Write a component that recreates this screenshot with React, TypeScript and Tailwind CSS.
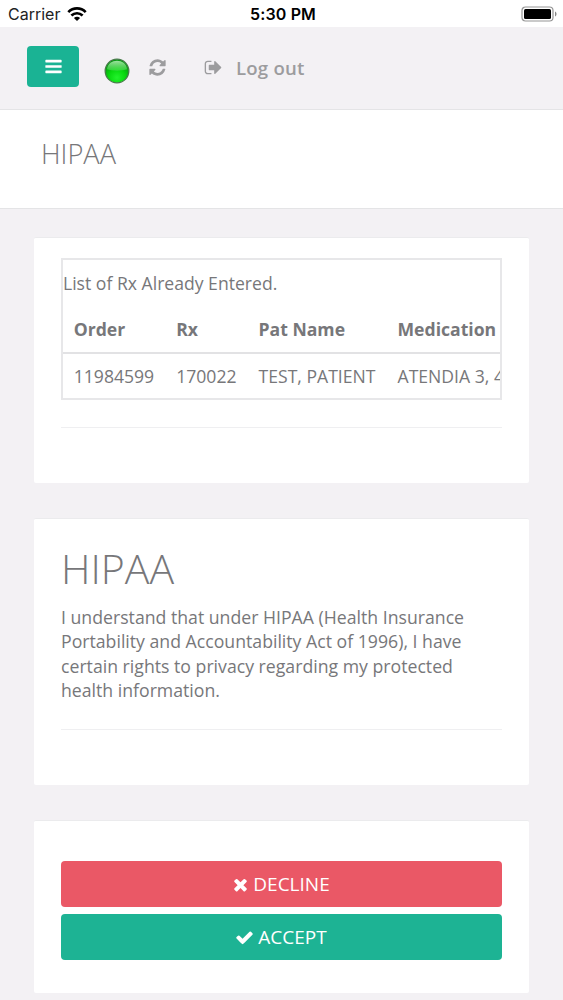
import type { ReactNode } from "react";

const ICONS = {
  bars: "M1664 1344v128q0 26-19 45t-45 19h-1408q-26 0-45-19t-19-45v-128q0-26 19-45t45-19h1408q26 0 45 19t19 45zm0-512v128q0 26-19 45t-45 19h-1408q-26 0-45-19t-19-45v-128q0-26 19-45t45-19h1408q26 0 45 19t19 45zm0-512v128q0 26-19 45t-45 19h-1408q-26 0-45-19t-19-45v-128q0-26 19-45t45-19h1408q26 0 45 19t19 45z",
  refresh:
    "M1639 1056q0 5-1 7-64 268-268 434.5t-478 166.5q-146 0-282.5-55t-243.5-157l-129 129q-19 19-45 19t-45-19-19-45v-448q0-26 19-45t45-19h448q26 0 45 19t19 45-19 45l-137 137q71 66 161 102t187 36q134 0 250-65t186-179q11-17 53-117 8-23 30-23h192q13 0 22.5 9.5t9.5 22.5zm25-800v448q0 26-19 45t-45 19h-448q-26 0-45-19t-19-45 19-45l138-138q-148-137-349-137-134 0-250 65t-186 179q-11 17-53 117-8 23-30 23h-199q-13 0-22.5-9.5t-9.5-22.5v-7q65-268 270-434.5t480-166.5q146 0 284 55.5t245 156.5l130-129q19-19 45-19t45 19 19 45z",
  signOut:
    "M704 1440q0 4 1 20t.5 26.5-3 23.5-10 19.5-20.5 6.5h-320q-119 0-203.5-84.5t-84.5-203.5v-704q0-119 84.5-203.5t203.5-84.5h320q13 0 22.5 9.5t9.5 22.5q0 4 1 20t.5 26.5-3 23.5-10 19.5-20.5 6.5h-320q-66 0-113 47t-47 113v704q0 66 47 113t113 47h312l11.5 1 11.5 3 8 5.5 7 9 2 13.5zm928-544q0 26-19 45l-544 544q-19 19-45 19t-45-19-19-45v-288h-448q-26 0-45-19t-19-45v-384q0-26 19-45t45-19h448v-288q0-26 19-45t45-19 45 19l544 544q19 19 19 45z",
  times:
    "M1490 1322q0 40-28 68l-136 136q-28 28-68 28t-68-28l-294-294-294 294q-28 28-68 28t-68-28l-136-136q-28-28-28-68t28-68l294-294-294-294q-28-28-28-68t28-68l136-136q28-28 68-28t68 28l294 294 294-294q28-28 68-28t68 28l136 136q28 28 28 68t-28 68l-294 294 294 294q28 28 28 68z",
  check:
    "M1671 566q0 40-28 68l-724 724-136 136q-28 28-68 28t-68-28l-136-136-362-362q-28-28-28-68t28-68l136-136q28-28 68-28t68 28l294 295 656-657q28-28 68-28t68 28l136 136q28 28 28 68z",
};

function Icon({ name, className }: { name: keyof typeof ICONS; className: string }) {
  return (
    <svg viewBox="0 0 1792 1792" fill="currentColor" className={className} aria-hidden="true">
      <path d={ICONS[name]} />
    </svg>
  );
}

function StatusBar() {
  return (
    <div className="grid h-[27px] grid-cols-3 items-center bg-white pl-2 pr-[6px] font-['Inter',sans-serif] text-black">
      <div className="flex items-center gap-[7px] pt-px text-[16px] leading-none text-[#222]">
        Carrier
        <svg viewBox="0 0 20 14" className="h-[14px] w-5" fill="none" stroke="#000" strokeWidth="2.7">
          <path d="M1.3 5.1C6.2.2 13.8.2 18.7 5.1" />
          <path d="M4.4 8.5c3.2-3 8-3 11.2 0" />
          <path d="M10 14 6.9 10.9c1.8-1.6 4.4-1.6 6.2 0z" fill="#000" stroke="none" />
        </svg>
      </div>
      <div className="pl-px pt-px text-center text-[16px] font-semibold leading-none tracking-[0.15px]">5:30 PM</div>
      <svg viewBox="0 0 36 16" className="h-4 w-9 justify-self-end">
        <rect x="1" y="1" width="31" height="14" rx="3.5" fill="#fff" stroke="#969696" strokeWidth="1.2" />
        <rect x="3" y="3" width="27" height="10" rx="1.5" fill="#000" />
        <path d="M34 5.5c2 .8 2 4.2 0 5z" fill="#888" />
      </svg>
    </div>
  );
}

function StatusLight() {
  return (
    <svg viewBox="0 0 26 26" className="ml-[25px] mt-[9px] size-[26px]">
      <defs>
        <radialGradient id="glow" cx="50%" cy="78%" r="65%">
          <stop offset="0" stopColor="#22f32c" />
          <stop offset="0.55" stopColor="#08d80e" />
          <stop offset="1" stopColor="#079b12" />
        </radialGradient>
        <linearGradient id="gloss" x1="0" x2="0" y1="0" y2="1">
          <stop offset="0" stopColor="#b8efb8" stopOpacity="0.85" />
          <stop offset="1" stopColor="#55db5b" stopOpacity="0.5" />
        </linearGradient>
      </defs>
      <circle cx="13" cy="13" r="11.8" fill="url(#glow)" stroke="#487b4a" strokeWidth="1.3" />
      <path d="M3 11.3C4 0 22 0 23 11.3 19 13.2 7 13.2 3 11.3z" fill="url(#gloss)" />
    </svg>
  );
}

function Navbar() {
  return (
    <nav className="flex h-[83px] items-center border-b border-[#e4e4e6] bg-[#f3f1f4] pb-[4px] pl-[27px] text-[#9c9c9e]">
      <button className="flex h-[41px] w-[52px] items-center justify-center rounded-[4px] bg-[#1ab394] text-white">
        <Icon name="bars" className="size-[19px] overflow-visible" />
      </button>
      <StatusLight />
      <Icon name="refresh" className="ml-[18px] mt-[3px] size-[19px]" />
      <Icon name="signOut" className="ml-[37px] mt-[3px] size-[19px]" />
      <a className="ml-[13px] mt-[3px] text-[18.6px] font-semibold leading-6 tracking-[0.2px]">Log out</a>
    </nav>
  );
}

function Card({ className, children }: { className: string; children: ReactNode }) {
  return (
    <section className={`rounded-[2px] border-t border-[#ebebed] bg-white px-[27px] ${className}`}>
      {children}
    </section>
  );
}

const COLUMNS = [
  { label: "Order", value: "11984599" },
  { label: "Rx", value: "170022" },
  { label: "Pat Name", value: "TEST, PATIENT" },
  { label: "Medication", value: "ATENDIA 3, 4" },
];

function RxTable() {
  return (
    <div className="h-[142px] overflow-hidden border-2 border-[#e7e7e9]">
      <p className="pt-[11px] leading-[25px]">List of Rx Already Entered.</p>
      <table className="-ml-[0.3px] mt-[10px] whitespace-nowrap">
        <thead>
          <tr className="h-[47px] border-b-2 border-[#e2e2e4]">
            {COLUMNS.map((c) => (
              <th key={c.label} className="px-[11px] text-left font-bold">
                {c.label}
              </th>
            ))}
          </tr>
        </thead>
        <tbody>
          <tr className="h-[46px]">
            {COLUMNS.map((c) => (
              <td key={c.label} className="px-[11px]">
                {c.value}
              </td>
            ))}
          </tr>
        </tbody>
      </table>
    </div>
  );
}

export default function App() {
  return (
    <div className="h-[1000px] overflow-hidden bg-[#f3f1f4] font-['Open_Sans',sans-serif] text-[17.6px] text-[#77777a]">
      <StatusBar />
      <Navbar />
      <header className="h-[99px] border-b border-[#e4e4e6] bg-white pl-[41px] pt-[26px]">
        <h2 className="text-[27.2px] font-light leading-9">HIPAA</h2>
      </header>
      <main className="flex flex-col gap-[35px] px-[34px] pt-[28px]">
        <Card className="h-[246px] pt-5">
          <RxTable />
          <hr className="mt-[27px] border-[#efeff1]" />
        </Card>
        <Card className="h-[267px] pt-[25px]">
          <h1 className="text-[41px] font-light leading-[48px]">HIPAA</h1>
          <p className="mt-[13px] whitespace-nowrap text-[17.68px] leading-[24.4px]">
            I understand that under HIPAA (Health Insurance
            <br />
            Portability and Accountability Act of 1996), I have
            <br />
            certain rights to privacy regarding my protected
            <br />
            health information.
          </p>
          <hr className="mt-[26px] border-[#efeff1]" />
        </Card>
        <Card className="flex h-[173px] flex-col gap-[7px] pt-[40px]">
          <button className="flex h-[46px] items-center justify-center gap-[3px] rounded-[4px] bg-[#ea5866] pr-[2px] text-[19px] text-white">
            <Icon name="times" className="size-[19px]" />
            DECLINE
          </button>
          <button className="flex h-[46px] items-center justify-center gap-[4px] rounded-[4px] bg-[#1db394] pr-px text-[19px] text-white">
            <Icon name="check" className="size-[19px]" />
            ACCEPT
          </button>
        </Card>
      </main>
    </div>
  );
}
